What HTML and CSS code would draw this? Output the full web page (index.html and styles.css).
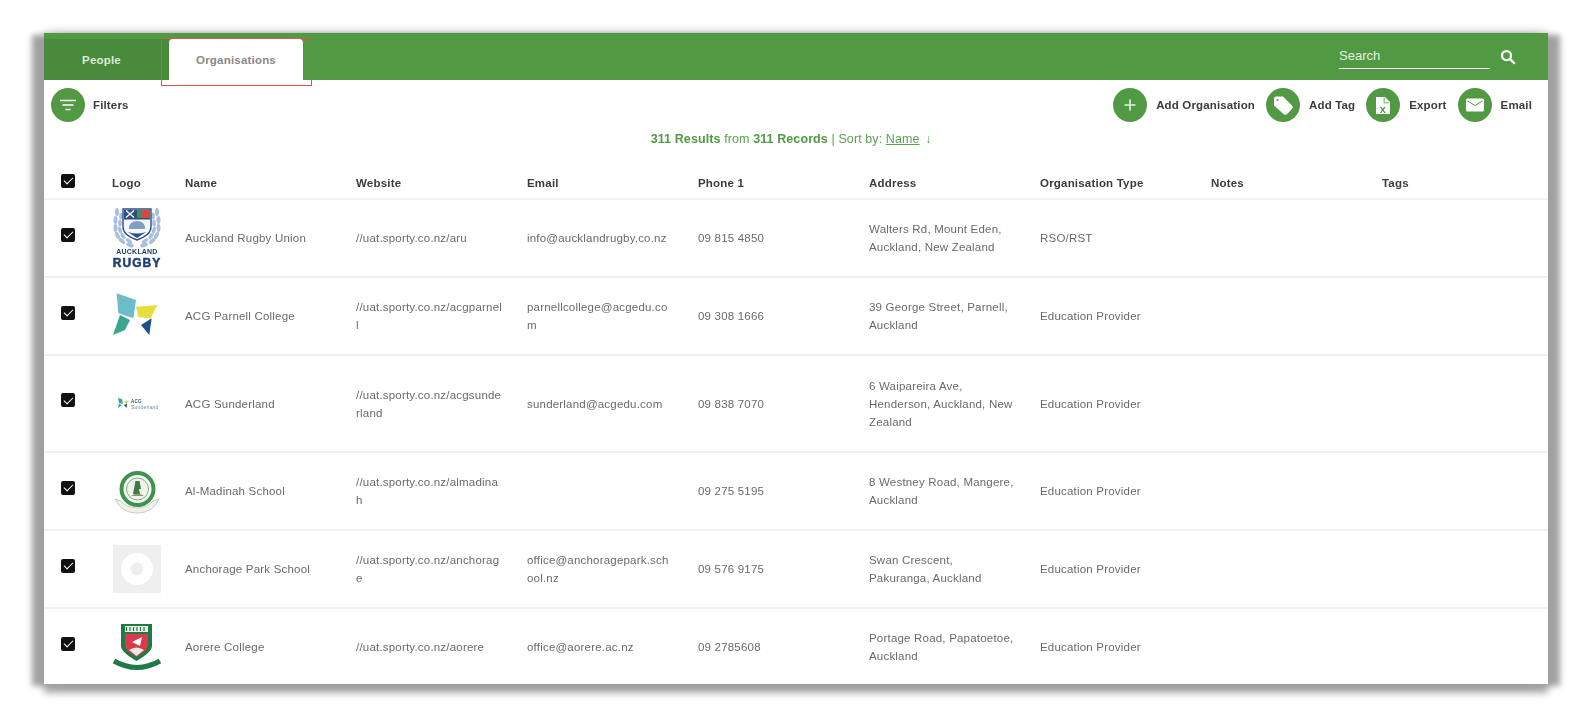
FILE: index.html
```html
<!DOCTYPE html>
<html lang="en">
<head>
    <meta charset="UTF-8">
    <title>Organisations</title>
    <link rel="stylesheet" href="styles.css">
</head>
<body>
    <div class="panel">
        <header class="topbar">
            <div class="tabs">
                <div class="tab tab-people">People</div>
                <div class="tab tab-active">Organisations</div>
            </div>
            <div class="search">
                <div class="search-box">Search</div>
                <svg class="search-icon" viewBox="0 0 24 24"><circle cx="10" cy="10" r="6" fill="none" stroke="#fff" stroke-width="3"/><path d="M14.5 14.5L21 21" stroke="#fff" stroke-width="3.2"/></svg>
            </div>
            <div class="annotation"></div>
        </header>

        <div class="toolbar">
            <div class="action action-filters">
                <span class="circle">
                    <svg viewBox="0 0 34 34"><path d="M9 12.5h16M11.5 17h11M14.5 21.5h5" stroke="#fff" stroke-width="1.6" fill="none"/></svg>
                </span>
                Filters
            </div>
            <div class="actions">
                <div class="action">
                    <span class="circle">
                        <svg viewBox="0 0 34 34"><path d="M17 11.5v11M11.5 17h11" stroke="#e8f3e4" stroke-width="1.6" fill="none"/></svg>
                    </span>
                    Add Organisation
                </div>
                <div class="action">
                    <span class="circle">
                        <svg viewBox="0 0 34 34"><path fill="#fff" fill-rule="evenodd" d="M8 11a2.5 2.5 0 0 1 2.5-2.5h6.5l9 9a2.5 2.5 0 0 1 0 3.5l-5 5a2.5 2.5 0 0 1-3.5 0L8 17.5zM11.5 11a1 1 0 1 0 .01 0z"/></svg>
                    </span>
                    Add Tag
                </div>
                <div class="action">
                    <span class="circle">
                        <svg viewBox="0 0 34 34"><path fill="#fff" d="M10 9h9l5 5v12H10z"/><path fill="#519a43" d="M18.5 9.5v5h5l-.8.8h-5v-5.800z"/><text x="17" y="24.5" class="xls">x</text></svg>
                    </span>
                    Export
                </div>
                <div class="action">
                    <span class="circle">
                        <svg viewBox="0 0 34 34"><rect x="8" y="10.5" width="18" height="13" rx="1.5" fill="#fff"/><path d="M9.5 13l7.5 4.500 7.500-4.500" stroke="#519a43" stroke-width="1" fill="none"/></svg>
                    </span>
                    Email
                </div>
            </div>
        </div>

        <p class="summary"><b>311 Results</b> from <b>311 Records</b> | Sort by: <u>Name</u> <span class="arrow">↓</span></p>

        <table class="orgs">
            <colgroup>
                <col class="col-check"><col class="col-logo"><col class="col-text"><col class="col-text"><col class="col-text"><col class="col-text"><col class="col-text"><col class="col-text"><col class="col-text"><col class="col-tags">
            </colgroup>
            <thead>
                <tr>
                    <th class="check-cell"><span class="check"></span></th>
                    <th>Logo</th>
                    <th>Name</th>
                    <th>Website</th>
                    <th>Email</th>
                    <th>Phone 1</th>
                    <th>Address</th>
                    <th>Organisation Type</th>
                    <th>Notes</th>
                    <th>Tags</th>
                </tr>
            </thead>
            <tbody>
                <tr>
                    <td class="check-cell"><span class="check"></span></td>
                    <td>
                        <svg class="logo" width="48" height="60" viewBox="0 0 48 60">
                            <g id="wreath" fill="#a9c0dc">
                                <ellipse cx="4" cy="4" rx="2" ry="4"/>
                                <ellipse cx="8" cy="8" rx="1.8" ry="3.5"/>
                                <ellipse cx="2.5" cy="12" rx="2" ry="4"/>
                                <ellipse cx="7" cy="15" rx="1.8" ry="3.5"/>
                                <ellipse cx="2.5" cy="20" rx="2" ry="4"/>
                                <ellipse cx="7" cy="22" rx="1.8" ry="3.5" transform="rotate(-15 7 22)"/>
                                <ellipse cx="4.5" cy="27.5" rx="2" ry="4" transform="rotate(-25 4.5 27.5)"/>
                                <ellipse cx="10" cy="28" rx="1.8" ry="3.5" transform="rotate(-35 10 28)"/>
                                <ellipse cx="9" cy="33" rx="2" ry="4" transform="rotate(-50 9 33)"/>
                                <ellipse cx="16" cy="33" rx="1.8" ry="3.5" transform="rotate(-55 16 33)"/>
                                <ellipse cx="17" cy="37" rx="2" ry="4" transform="rotate(-70 17 37)"/>
                            </g>
                            <use href="#wreath" transform="matrix(-1 0 0 1 48 0)"/>
                            <path d="M10 1h28v18q0 8-14 13Q10 27 10 19z" fill="#f4f7fb" stroke="#2c4f86" stroke-width="1.4"/>
                            <rect x="11" y="2" width="13" height="8" fill="#2c4f86"/>
                            <rect x="24" y="2" width="13" height="8" fill="#d9483b"/>
                            <rect x="24" y="2" width="4" height="8" fill="#3e8f5b"/>
                            <path d="M13 2.5l8 7M21 2.5l-8 7" stroke="#fff" stroke-width="1.3"/>
                            <rect x="11" y="10" width="26" height="1.5" fill="#2c4f86"/>
                            <path d="M16 21q0-8 8-8t8 8z" fill="#7f9fc6"/>
                            <path d="M15 24q9 3 18 0l-9 6z" fill="#2c4f86"/>
                            <text x="24" y="46" class="rugby-small">AUCKLAND</text>
                            <text x="24" y="58.5" class="rugby-big">RUGBY</text>
                        </svg>
                    </td>
                    <td>Auckland Rugby Union</td>
                    <td>//uat.sporty.co.nz/aru</td>
                    <td>info@aucklandrugby.co.nz</td>
                    <td>09 815 4850</td>
                    <td>Walters Rd, Mount Eden,<br>Auckland, New Zealand</td>
                    <td>RSO/RST</td>
                    <td></td>
                    <td></td>
                </tr>
                <tr>
                    <td class="check-cell"><span class="check"></span></td>
                    <td>
                        <svg class="logo" width="48" height="48" viewBox="0 0 48 48">
                            <path d="M3.7 1.3L23 8l-2.7 18.300-15-5z" fill="#6dbcc9"/>
                            <path d="M7 23l10 5-5 10L0 43z" fill="#3ba68f"/>
                            <path d="M23 14.7l21.300-1.700-6.600 13.300-12.400-1z" fill="#e5de3f"/>
                            <path d="M38.7 26.3L36.3 43 28 33z" fill="#1f4f8a"/>
                        </svg>
                    </td>
                    <td>ACG Parnell College</td>
                    <td class="wrap">//uat.sporty.co.nz/acgparnell</td>
                    <td class="wrap">parnellcollege@acgedu.com</td>
                    <td>09 308 1666</td>
                    <td>39 George Street, Parnell,<br>Auckland</td>
                    <td>Education Provider</td>
                    <td></td>
                    <td></td>
                </tr>
                <tr class="row-tall">
                    <td class="check-cell"><span class="check"></span></td>
                    <td>
                        <svg class="logo" width="48" height="14" viewBox="0 0 48 14">
                            <path d="M5 1l4 1 1 5-4-1z" fill="#3aa6a0"/>
                            <path d="M6 7l3 1-4 3z" fill="#2f9a80"/>
                            <path d="M11 4l5-.5L13 7z" fill="#d5d43f"/>
                            <path d="M14 6.5L13.500 11 11 8z" fill="#1f4f8a"/>
                            <text x="18" y="5.5" class="acg-name">ACG</text>
                            <text x="18" y="11.5" class="acg-sub">Sunderland</text>
                        </svg>
                    </td>
                    <td>ACG Sunderland</td>
                    <td class="wrap">//uat.sporty.co.nz/acgsunderland</td>
                    <td>sunderland@acgedu.com</td>
                    <td>09 838 7070</td>
                    <td>6 Waipareira Ave,<br>Henderson, Auckland, New<br>Zealand</td>
                    <td>Education Provider</td>
                    <td></td>
                    <td></td>
                </tr>
                <tr>
                    <td class="check-cell"><span class="check"></span></td>
                    <td>
                        <svg class="logo" width="48" height="44" viewBox="0 0 48 44">
                            <path d="M2 30q6 14 22 14t22-14l-6 2q-6 7-16 7T8 32z" fill="#eef1ea" stroke="#a8b5a2" stroke-width=".6"/>
                            <circle cx="24.5" cy="20" r="16" fill="#f7f8f2" stroke="#3f9350" stroke-width="4"/>
                            <circle cx="24.5" cy="20" r="11" fill="#f2f3e8" stroke="#7ab184" stroke-width="1"/>
                            <path d="M22.5 12h4l1.500 8h-2l1 5h-7z" fill="#3f7a4a"/>
                            <path d="M18 27q6.500-5 13 0z" fill="#8a9a6f"/>
                        </svg>
                    </td>
                    <td>Al-Madinah School</td>
                    <td class="wrap">//uat.sporty.co.nz/almadinah</td>
                    <td></td>
                    <td>09 275 5195</td>
                    <td>8 Westney Road, Mangere,<br>Auckland</td>
                    <td>Education Provider</td>
                    <td></td>
                    <td></td>
                </tr>
                <tr>
                    <td class="check-cell"><span class="check"></span></td>
                    <td>
                        <svg class="logo" width="48" height="48" viewBox="0 0 48 48">
                            <rect width="48" height="48" fill="#efefef"/>
                            <circle cx="24" cy="24" r="11.25" fill="none" stroke="#fff" stroke-width="9.5"/>
                        </svg>
                    </td>
                    <td>Anchorage Park School</td>
                    <td class="wrap">//uat.sporty.co.nz/anchorage</td>
                    <td class="wrap">office@anchoragepark.school.nz</td>
                    <td>09 576 9175</td>
                    <td>Swan Crescent,<br>Pakuranga, Auckland</td>
                    <td>Education Provider</td>
                    <td></td>
                    <td></td>
                </tr>
                <tr>
                    <td class="check-cell"><span class="check"></span></td>
                    <td>
                        <svg class="logo" width="48" height="50" viewBox="0 0 48 50">
                            <path d="M8 2h31v22q0 6-15.500 15Q8 30 8 24z" fill="#1f7a45"/>
                            <rect x="12" y="4" width="23" height="6" fill="#e9efe6"/>
                            <path d="M13.5 5v4M17 5v4M20.5 5v4M24 5v4M27.5 5v4M31 5v4" stroke="#1f7a45" stroke-width="1.2"/>
                            <path d="M12 12h23v11q0 5-11.500 12Q12 29 12 23z" fill="#dc3a4c"/>
                            <path d="M19 20l10-5-2 9z" fill="#fff"/>
                            <path d="M16 28q7.500-5 15 0l-7.500 6z" fill="#e6ece1"/>
                            <path d="M1 39q23 13 46 0" fill="none" stroke="#1f7a45" stroke-width="5"/>
                        </svg>
                    </td>
                    <td>Aorere College</td>
                    <td>//uat.sporty.co.nz/aorere</td>
                    <td>office@aorere.ac.nz</td>
                    <td>09 2785608</td>
                    <td>Portage Road, Papatoetoe,<br>Auckland</td>
                    <td>Education Provider</td>
                    <td></td>
                    <td></td>
                </tr>
            </tbody>
        </table>
    </div>
</body>
</html>
```

FILE: styles.css
```css
* {
    box-sizing: border-box;
}

body {
    margin: 0;
    height: 722px;
    padding: 33px 0 0 44px;
    background: #ffffff;
    font-family: "Liberation Sans", Arial, sans-serif;
    overflow: hidden;
}

.panel {
    width: 1504px;
    height: 651px;
    background: #ffffff;
    overflow: hidden;
    filter: blur(0.35px);
    box-shadow: -12px 2px 6px 0 #a0a0a0, 12px 2px 6px 0 #a0a0a0, 0 9px 7px 0 #a8a8a8, 0 -3px 8px 0 rgba(0, 0, 0, 0.14);
}

.topbar {
    position: relative;
    height: 47px;
    background: #519a43;
    display: flex;
    justify-content: space-between;
}

.tabs {
    display: flex;
    align-items: flex-end;
}

.tab {
    height: 41px;
    display: flex;
    align-items: center;
    justify-content: center;
    font-size: 11.5px;
    font-weight: 700;
    letter-spacing: 0.2px;
}

.tab-people {
    width: 125px;
    padding-right: 10px;
    background: #4a8a3d;
    color: #dcebd6;
}

.tab-active {
    width: 134px;
    background: #ffffff;
    color: #8a8a8a;
    border-radius: 4px 4px 0 0;
}

.annotation {
    position: absolute;
    left: 117px;
    top: 5px;
    width: 151px;
    height: 48px;
    border: 1px solid #d9534f;
}

.search {
    display: flex;
    align-items: flex-start;
    padding: 13px 31px 0 0;
}

.search-box {
    width: 151px;
    height: 23px;
    border-bottom: 1px solid #ffffff;
    color: #e4f0e0;
    font-size: 13px;
    line-height: 20px;
}

.search-icon {
    width: 18px;
    height: 18px;
    margin: 2px 0 0 9px;
}

.toolbar {
    display: flex;
    justify-content: space-between;
    height: 50px;
    padding: 8px 16px 0 7px;
}

.actions {
    display: flex;
    gap: 11px;
}

.action {
    display: flex;
    align-items: center;
    gap: 9px;
    height: 34px;
    font-size: 11.5px;
    font-weight: 700;
    letter-spacing: 0.15px;
    color: #3c3c3c;
}

.action-filters {
    gap: 8px;
}

.circle {
    width: 34px;
    height: 34px;
    border-radius: 50%;
    background: #519a43;
    flex: none;
}

.circle svg {
    display: block;
    width: 34px;
    height: 34px;
}

.xls {
    font-family: "Liberation Sans", sans-serif;
    font-size: 11px;
    font-weight: 700;
    text-anchor: middle;
    fill: #519a43;
}

.summary {
    margin: 0;
    height: 18px;
    padding-right: 10px;
    text-align: center;
    font-size: 12.5px;
    line-height: 18px;
    letter-spacing: 0.1px;
    color: #5aa34c;
}

.summary b {
    color: #4f9a43;
}

.arrow {
    font-size: 12px;
    margin-left: 2px;
}

.orgs {
    width: 1504px;
    table-layout: fixed;
    border-collapse: collapse;
}

.col-check {
    width: 68px;
}

.col-logo {
    width: 73px;
}

.col-text {
    width: 171px;
}

.col-tags {
    width: 166px;
}

th {
    height: 51px;
    padding: 20px 0 0 0;
    text-align: left;
    font-size: 11.5px;
    font-weight: 700;
    letter-spacing: 0.2px;
    color: #3c3c3c;
    border-bottom: 2px solid #f3f3f3;
}

td {
    height: 78px;
    padding: 0 24px 0 0;
    font-size: 11.5px;
    line-height: 18px;
    letter-spacing: 0.2px;
    color: #6a6a6a;
    border-bottom: 2px solid #f0f0f0;
}

.row-tall td {
    height: 97px;
}

td.wrap {
    word-break: break-all;
}

.check-cell {
    padding: 0 0 0 17px;
}

th.check-cell {
    padding-top: 15px;
}

.check {
    position: relative;
    display: block;
    width: 14px;
    height: 14px;
    margin-bottom: 7px;
    background: #111111;
    border-radius: 2px;
}

th .check {
    margin-bottom: 0;
}

.check::after {
    content: "";
    position: absolute;
    left: 3px;
    top: 3.5px;
    width: 8px;
    height: 4px;
    border-left: 1.5px solid #ffffff;
    border-bottom: 1.5px solid #ffffff;
    transform: rotate(-45deg);
}

.logo {
    display: block;
    margin-left: 1px;
    overflow: visible;
}

.rugby-small {
    font-family: "Liberation Sans", sans-serif;
    font-size: 7px;
    font-weight: 700;
    text-anchor: middle;
    fill: #1f3f72;
    textLength: 46px;
}

.rugby-big {
    font-family: "Liberation Sans", sans-serif;
    font-size: 12px;
    font-weight: 700;
    letter-spacing: 1px;
    text-anchor: middle;
    fill: #1f3f72;
    stroke: #1f3f72;
    stroke-width: 0.5;
}

.acg-name {
    font-family: "Liberation Sans", sans-serif;
    font-size: 4.5px;
    font-weight: 700;
    fill: #2f5f8f;
}

.acg-sub {
    font-family: "Liberation Sans", sans-serif;
    font-size: 5px;
    fill: #6b8fb0;
}
```
